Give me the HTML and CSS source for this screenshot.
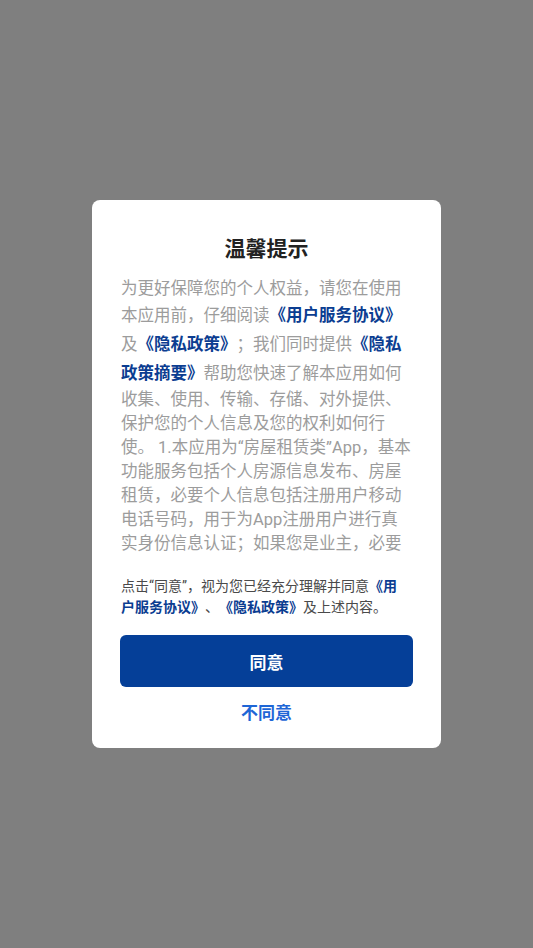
FILE: index.html
```html
<!DOCTYPE html>
<html lang="zh-CN">
<head>
    <meta charset="UTF-8">
    <meta name="viewport" content="width=device-width, initial-scale=1.0">
    <title>温馨提示</title>
    <link rel="stylesheet" href="styles.css">
</head>
<body>
    <div class="mask">
        <div class="dialog">
            <h2 class="title">温馨提示</h2>
            <div class="content">
                为更好保障您的个人权益，请您在使用本应用前，仔细阅读<span class="link">《用户服务协议》</span>及<span class="link">《隐私政策》</span>；我们同时提供<span class="link">《隐私政策摘要》</span>帮助您快速了解本应用如何收集、使用、传输、存储、对外提供、保护您的个人信息及您的权利如何行使。 1.本应用为“房屋租赁类”App，基本功能服务包括个人房源信息发布、房屋租赁，必要个人信息包括注册用户移动电话号码，用于为App注册用户进行真实身份信息认证；如果您是业主，必要个人信息还包括房源信息，用于发布房源。
            </div>
            <p class="notice">点击“同意”，视为您已经充分理解并同意<span class="link">《用户服务协议》</span>、<span class="link">《隐私政策》</span>及上述内容。</p>
            <button class="btn-agree">同意</button>
            <button class="btn-refuse">不同意</button>
        </div>
    </div>
</body>
</html>
```

FILE: styles.css
```css
* {
    margin: 0;
    padding: 0;
    box-sizing: border-box;
    font-family: Roboto, "Noto Sans CJK SC", sans-serif;
    text-spacing-trim: space-all;
}

body {
    background-color: #7f7f7f;
}

.mask {
    height: 100vh;
    display: flex;
    align-items: center;
    justify-content: center;
}

.dialog {
    width: 349px;
    height: 548px;
    background-color: #ffffff;
    border-radius: 8px;
    padding: 35px 28px 0 28px;
    display: flex;
    flex-direction: column;
}

.title {
    font-size: 21px;
    line-height: 29px;
    font-weight: bold;
    color: #222;
    text-align: center;
}

.content {
    margin-top: 13px;
    height: 279px;
    overflow: hidden;
    padding-left: 1px;
    font-size: 16.5px;
    line-height: 24px;
    color: #9c9c9c;
}

.content .link {
    line-height: 29px;
}

.link {
    color: #0b3d91;
    font-weight: bold;
}

.notice {
    margin-top: 20px;
    padding-left: 1px;
    padding-right: 6px;
    font-size: 14px;
    line-height: 21px;
    color: #4a4a4a;
}

.btn-agree {
    margin-top: 17px;
    height: 52px;
    width: 100%;
    border: none;
    border-radius: 6px;
    background-color: #053f98;
    color: #fff;
    font-size: 17px;
    font-weight: bold;
}

.btn-refuse {
    margin-top: 12px;
    height: 24px;
    border: none;
    background: none;
    color: #1e66d6;
    font-size: 17px;
    font-weight: bold;
}
```
